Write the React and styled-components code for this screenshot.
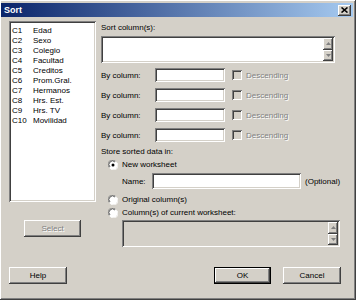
import React from 'react'
import styled, { createGlobalStyle } from 'styled-components'

const Global = createGlobalStyle`
  html, body { margin: 0; padding: 0; background: #d4d0c8; }
  body {
    font-family: "Liberation Sans", Arial, sans-serif;
    font-size: 8px;
    color: #000;
  }
`

const sunken = `
  box-shadow: inset 1px 1px #808080, inset -1px -1px #ffffff,
    inset 2px 2px #404040, inset -2px -2px #d4d0c8;
`
const raised = `
  box-shadow: inset -1px -1px #404040, inset 1px 1px #ffffff,
    inset -2px -2px #808080, inset 2px 2px #d4d0c8;
`
const defaultRaised = `
  box-shadow: inset 0 0 0 1px #000, inset -2px -2px #404040, inset 2px 2px #ffffff,
    inset -3px -3px #808080;
`

const Window = styled.div`
  width: 356px;
  height: 300px;
  box-sizing: border-box;
  padding: 3px 3px 0 1px;
  background: #d4d0c8;
  ${raised}
  display: flex;
  flex-direction: column;
  overflow: hidden;
`

const TitleBar = styled.div`
  height: 14px;
  display: flex;
  align-items: center;
  justify-content: space-between;
  padding: 0 2px 0 3px;
  background: linear-gradient(to right, #0a246a, #a6caf0);
`

const Title = styled.span`
  color: #fff;
  font-weight: bold;
  font-size: 9px;
`

const CloseBtn = styled.div`
  width: 13px;
  height: 11px;
  background: #d4d0c8;
  ${raised}
  display: flex;
  align-items: center;
  justify-content: center;
`

const Body = styled.div`
  padding: 4px 0 0 8px;
  display: flex;
  flex-direction: column;
`

const Main = styled.div`
  display: grid;
  grid-template-columns: 87px 240px;
  column-gap: 5px;
  height: 246px;
`

const LeftCol = styled.div`
  display: flex;
  flex-direction: column;
  align-items: center;
`

const ListBox = styled.div`
  width: 87px;
  height: 181px;
  box-sizing: border-box;
  background: #fff;
  ${sunken}
  padding: 5px 0 0 3px;
`

const ListItem = styled.div`
  display: flex;
  line-height: 10px;
  height: 10px;
`

const ColId = styled.span`
  width: 21px;
`

const Button = styled.div`
  width: ${p => p.$w || 57}px;
  height: 17px;
  box-sizing: border-box;
  ${p => (p.$default ? defaultRaised : raised)}
  display: flex;
  align-items: center;
  justify-content: center;
  color: ${p => (p.$disabled ? '#808080' : '#000')};
  text-shadow: ${p => (p.$disabled ? '1px 1px #fff' : 'none')};
  margin-top: ${p => p.$mt || 0}px;
`

const RightCol = styled.div`
  display: flex;
  flex-direction: column;
`

const Label = styled.div`
  line-height: ${p => p.$lh || 13}px;
  height: ${p => p.$lh || 13}px;
  margin-top: ${p => p.$mt || 0}px;
  margin-left: ${p => p.$ml || 0}px;
`

const TextArea = styled.div`
  width: ${p => p.$w}px;
  height: 27px;
  box-sizing: border-box;
  margin-top: ${p => p.$mt || 0}px;
  margin-left: ${p => p.$ml || 0}px;
  background: ${p => (p.$disabled ? '#d4d0c8' : '#fff')};
  ${sunken}
  display: flex;
  justify-content: flex-end;
  padding: 2px;
`

const ScrollCol = styled.div`
  width: 10px;
  display: flex;
  flex-direction: column;
`

const ScrollBtn = styled.div`
  flex: 1;
  background: #d4d0c8;
  ${raised}
  display: flex;
  align-items: center;
  justify-content: center;
`

const ByRows = styled.div`
  display: flex;
  flex-direction: column;
  gap: 6px;
  margin-top: 5px;
`

const ByRow = styled.div`
  display: flex;
  align-items: center;
  height: 14px;
`

const ByLabel = styled.span`
  width: 54px;
`

const Input = styled.div`
  width: ${p => p.$w}px;
  height: ${p => p.$h || 14}px;
  box-sizing: border-box;
  background: #fff;
  ${sunken}
`

const Check = styled.div`
  width: 10px;
  height: 10px;
  box-sizing: border-box;
  margin-left: 7px;
  background: #d4d0c8;
  ${sunken}
`

const Disabled = styled.span`
  color: #808080;
  text-shadow: 1px 1px #fff;
  margin-left: 4px;
`

const RadioRow = styled.div`
  display: flex;
  align-items: center;
  height: 13px;
  padding-left: 7px;
  gap: 4px;
  margin-top: ${p => p.$mt || 0}px;
`

const NameRow = styled.div`
  display: flex;
  align-items: center;
  height: 16px;
  margin-top: 2px;
  padding-left: 21px;
`

const NameLabel = styled.span`
  width: 30px;
`

const Optional = styled.span`
  margin-left: 4px;
`

const Footer = styled.div`
  display: flex;
  justify-content: space-between;
  width: 332px;
`

const FooterRight = styled.div`
  display: flex;
  gap: 12px;
`

const Radio = ({ checked }) => (
  <svg width="10" height="10" viewBox="0 0 12 12">
    <circle cx="6" cy="6" r="5.5" fill="#fff" />
    <path d="M1.5 9 A5 5 0 0 1 9 1.5" stroke="#808080" fill="none" />
    <path d="M2.4 8.4 A4 4 0 0 1 8.4 2.4" stroke="#404040" fill="none" />
    <path d="M3 10.5 A5 5 0 0 0 10.5 3" stroke="#fff" fill="none" />
    {checked && <circle cx="6" cy="6" r="1.8" fill="#000" />}
  </svg>
)

const Arrow = ({ down }) => (
  <svg width="5" height="3" viewBox="0 0 5 3">
    <path d={down ? 'M0 0 H5 L2.5 3 Z' : 'M0 3 H5 L2.5 0 Z'} fill="#808080" />
  </svg>
)

const Scroll = () => (
  <ScrollCol>
    <ScrollBtn><Arrow /></ScrollBtn>
    <ScrollBtn><Arrow down /></ScrollBtn>
  </ScrollCol>
)

const columns = [
  ['C1', 'Edad'], ['C2', 'Sexo'], ['C3', 'Colegio'], ['C4', 'Facultad'],
  ['C5', 'Creditos'], ['C6', 'Prom.Gral.'], ['C7', 'Hermanos'],
  ['C8', 'Hrs. Est.'], ['C9', 'Hrs. TV'], ['C10', 'Movilidad'],
]

export default function App() {
  return (
    <>
      <Global />
      <Window>
        <TitleBar>
          <Title>Sort</Title>
          <CloseBtn>
            <svg width="7" height="6" viewBox="0 0 7 6">
              <path d="M0.5 0.5 L6.5 5.5 M6.5 0.5 L0.5 5.5" stroke="#000" strokeWidth="1.6" />
            </svg>
          </CloseBtn>
        </TitleBar>
        <Body>
          <Main>
            <LeftCol>
              <ListBox>
                {columns.map(([id, name]) => (
                  <ListItem key={id}>
                    <ColId>{id}</ColId>
                    <span>{name}</span>
                  </ListItem>
                ))}
              </ListBox>
              <Button $disabled $mt={18}>Select</Button>
            </LeftCol>
            <RightCol>
              <Label>Sort column(s):</Label>
              <TextArea $w={234} $mt={2}><Scroll /></TextArea>
              <ByRows>
                {[0, 1, 2, 3].map(i => (
                  <ByRow key={i}>
                    <ByLabel>By column:</ByLabel>
                    <Input $w={70} />
                    <Check />
                    <Disabled>Descending</Disabled>
                  </ByRow>
                ))}
              </ByRows>
              <Label $lh={12} $mt={4}>Store sorted data in:</Label>
              <RadioRow><Radio checked /><span>New worksheet</span></RadioRow>
              <NameRow>
                <NameLabel>Name:</NameLabel>
                <Input $w={149} $h={16} />
                <Optional>(Optional)</Optional>
              </NameRow>
              <RadioRow $mt={4}><Radio /><span>Original column(s)</span></RadioRow>
              <RadioRow><Radio /><span>Column(s) of current worksheet:</span></RadioRow>
              <TextArea $w={218} $ml={21} $mt={1} $disabled><Scroll /></TextArea>
            </RightCol>
          </Main>
          <Footer>
            <Button $w={58}>Help</Button>
            <FooterRight>
              <Button $default>OK</Button>
              <Button $w={58}>Cancel</Button>
            </FooterRight>
          </Footer>
        </Body>
      </Window>
    </>
  )
}
